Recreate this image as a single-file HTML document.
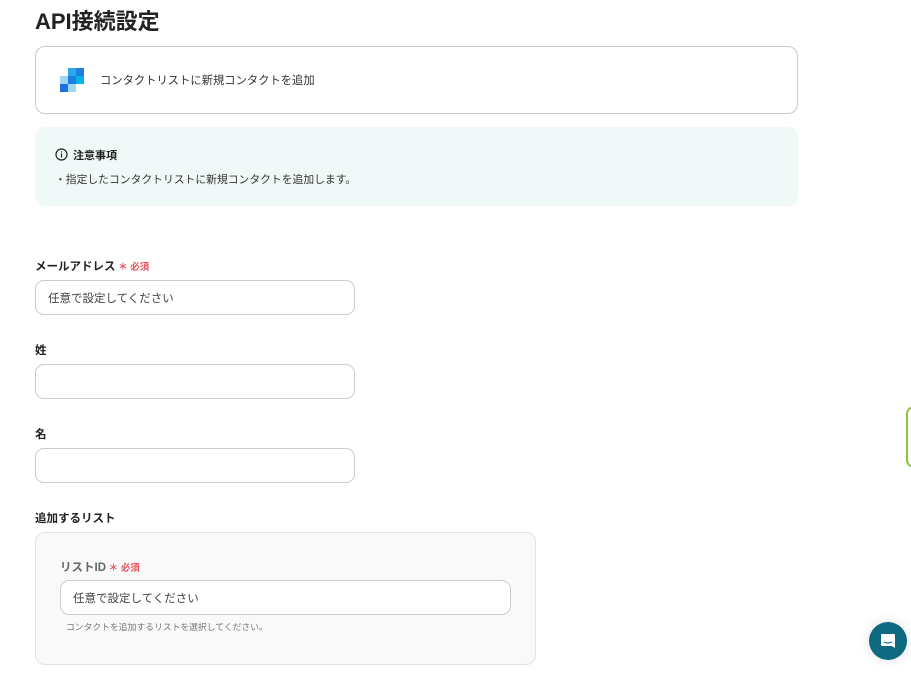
<!DOCTYPE html>
<html><head><meta charset="utf-8"><style>
*{box-sizing:border-box;margin:0;padding:0}
body{width:911px;height:673px;overflow:hidden;background:#fff;font-family:"Liberation Sans","Noto Sans CJK JP",sans-serif;color:#222;position:relative}
.abs{position:absolute}
h1{position:absolute;left:35px;top:4px;font-size:22px;font-weight:700;color:#222}
.card{left:35px;top:46px;width:763px;height:68px;border:1px solid #c9c9c9;border-radius:10px}
.note{left:35px;top:127px;width:763px;height:79px;background:#f1f8f8;border-radius:10px}
.lbl{font-size:11.5px;font-weight:700;color:#222}
.req{color:#e8505b;font-size:9.5px;font-weight:700}
.inp{border:1px solid #c8ccd4;border-radius:9px;background:#fff;font-size:11.5px;color:#444;padding-left:12px;display:flex;align-items:center}
</style></head><body>
<h1>API接続設定</h1>
<div class="abs card">
 <svg class="abs" style="left:24px;top:21px" width="24" height="24" viewBox="0 0 24 24">
  <rect x="8" y="0" width="8" height="8" fill="#29a9e8"/><rect x="16" y="0" width="8" height="8" fill="#1e7fe0"/>
  <rect x="0" y="8" width="8" height="8" fill="#9fd6f3"/><rect x="8" y="8" width="8" height="8" fill="#1e7fe0"/><rect x="16" y="8" width="8" height="8" fill="#00b3e6"/>
  <rect x="0" y="16" width="8" height="8" fill="#1e6fe0"/><rect x="8" y="16" width="8" height="8" fill="#9fd6f3"/>
 </svg>
 <div class="abs" style="left:64px;top:25px;font-size:11.3px;color:#333">コンタクトリストに新規コンタクトを追加</div>
</div>
<div class="abs note">
 <svg class="abs" style="left:20px;top:21px" width="13" height="13" viewBox="0 0 13 13"><circle cx="6.5" cy="6.5" r="5.5" fill="none" stroke="#222" stroke-width="1.2"/><rect x="5.9" y="5.5" width="1.2" height="4" fill="#222"/><rect x="5.9" y="3.3" width="1.2" height="1.2" fill="#222"/></svg>
 <div class="abs lbl" style="left:38px;top:20px;font-size:11px">注意事項</div>
 <div class="abs" style="left:20px;top:44px;font-size:10.8px;color:#333">・指定したコンタクトリストに新規コンタクトを追加します。</div>
</div>
<div class="abs lbl" style="left:35px;top:258px">メールアドレス<span class="req"> ＊ 必須</span></div>
<div class="abs inp" style="left:35px;top:280px;width:320px;height:35px">任意で設定してください</div>
<div class="abs lbl" style="left:35px;top:342px">姓</div>
<div class="abs inp" style="left:35px;top:364px;width:320px;height:35px"></div>
<div class="abs lbl" style="left:35px;top:426px">名</div>
<div class="abs inp" style="left:35px;top:448px;width:320px;height:35px"></div>
<div class="abs lbl" style="left:35px;top:510px">追加するリスト</div>
<div class="abs" style="left:35px;top:532px;width:501px;height:133px;background:#f9f9f9;border:1px solid #e2e2e2;border-radius:10px">
 <div class="abs lbl" style="left:24px;top:26px;color:#666">リストID<span class="req"> ＊ 必須</span></div>
 <div class="abs inp" style="left:24px;top:47px;width:451px;height:35px">任意で設定してください</div>
 <div class="abs" style="left:30px;top:87px;font-size:8.8px;color:#777">コンタクトを追加するリストを選択してください。</div>
</div>
<div class="abs" style="left:906px;top:406px;width:20px;height:62px;border:2px solid #8cc63f;border-radius:8px"></div>
<div class="abs" style="left:869px;top:622px;width:38px;height:38px;border-radius:50%;background:#0e6a80;box-shadow:0 0 12px rgba(0,0,0,.12)">
 <svg class="abs" style="left:10px;top:10px" width="18" height="18" viewBox="0 0 18 18"><path d="M3 2h12a1 1 0 0 1 1 1v13l-3-2H3a1 1 0 0 1-1-1V3a1 1 0 0 1 1-1z" fill="#fff"/><path d="M5 10q4 2 8 0" stroke="#0e6a80" stroke-width="1.2" fill="none"/></svg>
</div>
</body></html>
